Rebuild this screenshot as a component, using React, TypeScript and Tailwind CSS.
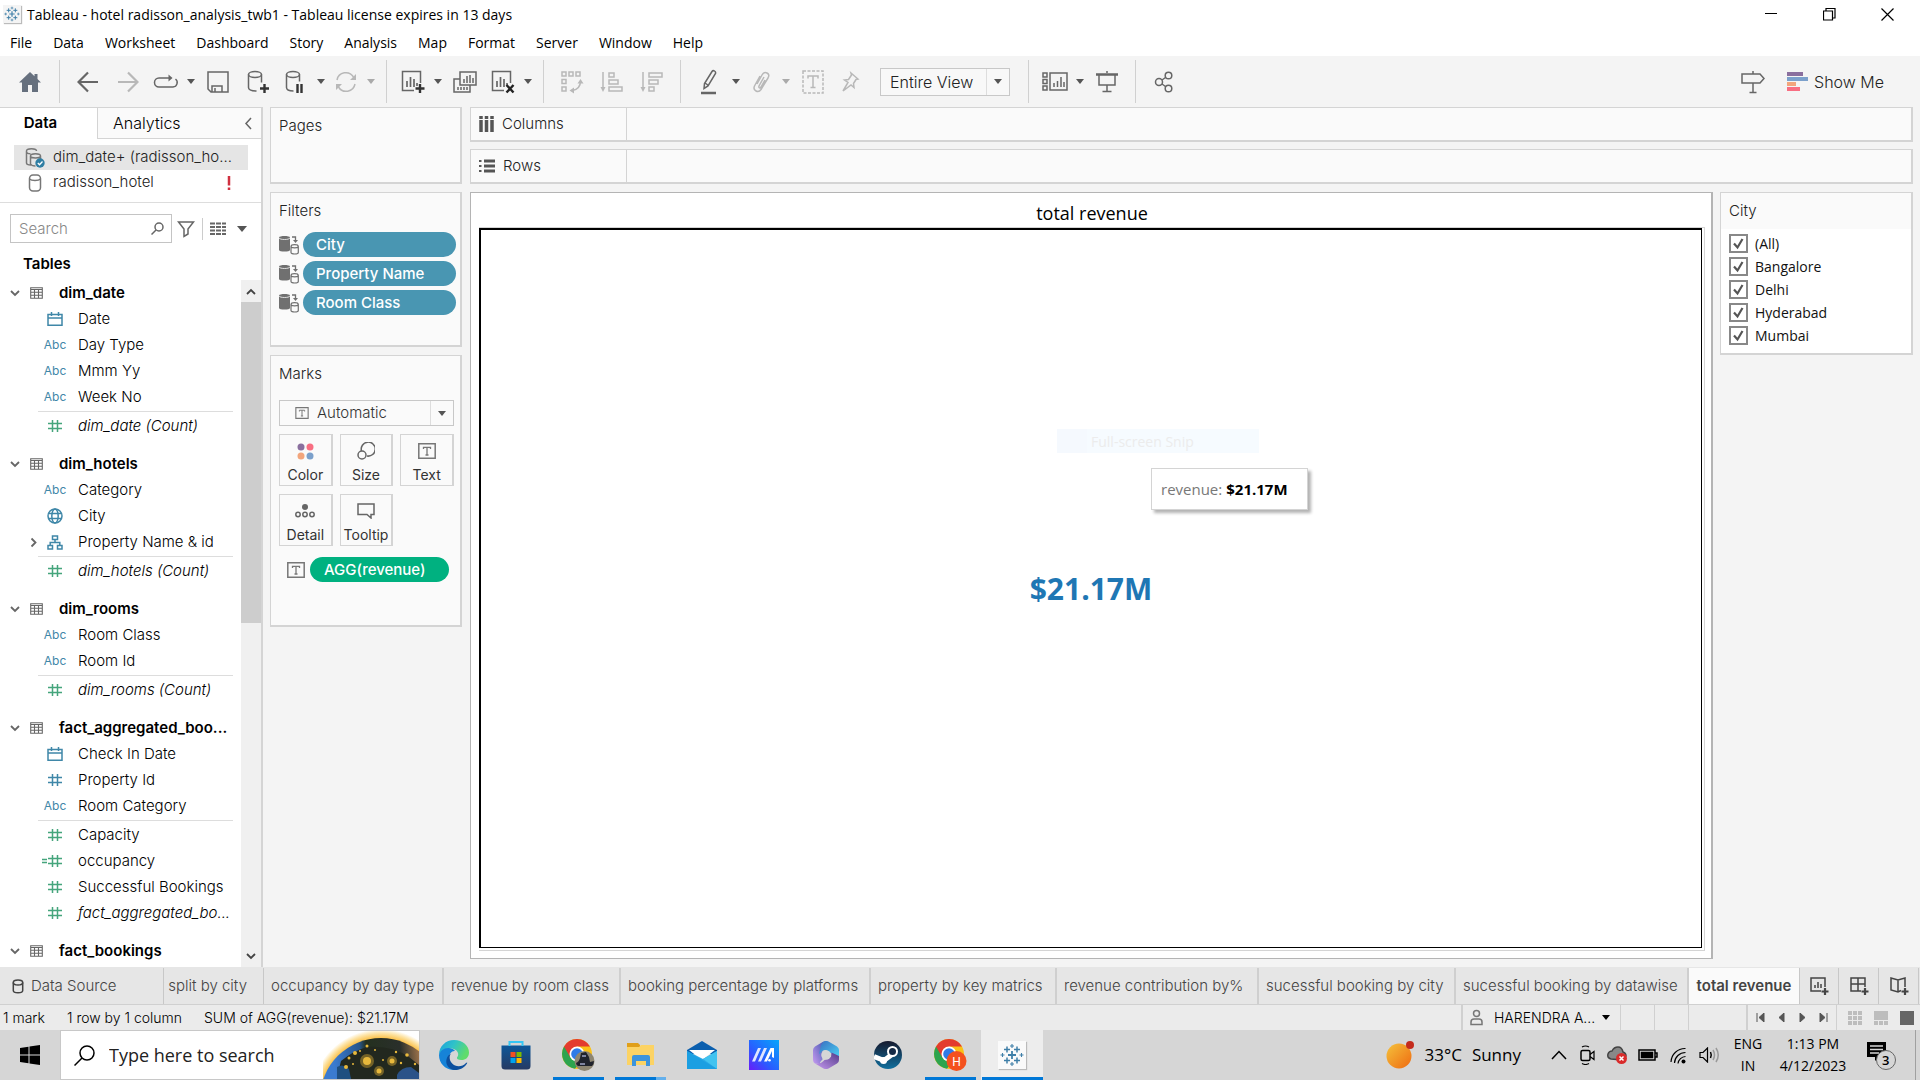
import type { ReactNode } from "react";

function Svg({ w, h = w, box, className = "", children }: { w: number; h?: number; box?: string; className?: string; children: ReactNode }) {
  return (
    <svg width={w} height={h} viewBox={box ?? `0 0 ${w} ${h}`} fill="none" stroke="currentColor" strokeWidth="1.5" className={`shrink-0 ${className}`} aria-hidden="true">
      {children}
    </svg>
  );
}

function Caret({ className = "text-[#555]" }: { className?: string }) {
  return (
    <Svg w={8} h={5} className={className}>
      <path d="M0 0h8L4 5z" fill="currentColor" stroke="none" />
    </Svg>
  );
}

const tableauMark = (
  <g stroke="#3f7fa8" strokeWidth="1.5">
    <path d="M12 8v8M8 12h8" strokeWidth="1.8" />
    <path d="M7 3.500v6M4 6.500h6M17 3.500v6M14 6.500h6M7 14.500v6M4 17.500h6M17 14.500v6M14 17.500h6" />
    <path d="M12 1v4M10 3h4M12 19v4M10 21h4M2.500 10v4M.5 12h4M21.500 10v4M19.500 12h4" strokeWidth="1.100" />
  </g>
);

function Sep() {
  return <span className="mx-2 h-[43px] w-px shrink-0 self-center bg-[#d0d0d0]" />;
}

function Tool({ label, wide = true, dim = false, children }: { label: string; wide?: boolean; dim?: boolean; children: ReactNode }) {
  return (
    <button type="button" aria-label={label} className={`flex h-full shrink-0 items-center justify-center ${wide ? "w-10" : "w-9"} ${dim ? "text-[#b8b8b8]" : "text-[#666]"}`}>
      {children}
    </button>
  );
}

function ToolCaret({ label, dim = false }: { label: string; dim?: boolean }) {
  return (
    <button type="button" aria-label={label} className="flex h-full w-3.5 shrink-0 items-center justify-center">
      <Caret className={dim ? "text-[#aaa]" : "text-[#555]"} />
    </button>
  );
}

const plus = <path d="M20 15v9M15.5 19.5h9" stroke="#333" strokeWidth="2.4" />;
const sheetBars = <path d="M7 12v6M10.500 8v10M14 10v8M17 14v3" strokeWidth="1.7" />;

function Toolbar() {
  return (
    <div className="flex h-[51px] items-center bg-[#f4f4f4]">
      <button type="button" aria-label="Start page" className="flex h-full w-[51px] items-center justify-center pl-2">
        <Svg w={24} h={22} className="text-[#66707e]">
          <path d="M12 1 1 11.500h3V21h6v-7h4v7h6v-9.500h3L19.500 8V3h-3v2.200z" fill="currentColor" stroke="none" />
        </Svg>
      </button>
      <Sep />
      <Tool label="Undo">
        <Svg w={22} h={22}><path d="M21 11H2M11 1.500 1.500 11l9.500 9.500" strokeWidth="2.200" /></Svg>
      </Tool>
      <Tool label="Redo" dim>
        <Svg w={22} h={22}><path d="M1 11h19M11 1.500 20.500 11 11 20.500" strokeWidth="2.200" /></Svg>
      </Tool>
      <Tool label="Replay" wide={false}>
        <Svg w={26} h={16}>
          <path d="M17 4H6a4.500 4.500 0 0 0 0 9h14a4.500 4.500 0 0 0 2.500-8" />
          <path d="m15.500.5 4 3.500-4 3.500z" fill="currentColor" stroke="none" />
        </Svg>
      </Tool>
      <ToolCaret label="Replay options" />
      <Tool label="Save">
        <Svg w={22} h={22}><path d="M1 1h20v20H4l-3-3zM5 21v-6h10v6M8 17v4" /></Svg>
      </Tool>
      <Tool label="New data source">
        <Svg w={26} h={26}>
          <ellipse cx="10" cy="5.500" rx="6.500" ry="3" />
          <path d="M3.500 5.500v13c0 2.500 3 3.500 8 3.500M16.500 5.500v8" />
          <path d="M19.500 15v9M15 19.500h9" stroke="#333" strokeWidth="2.400" />
        </Svg>
      </Tool>
      <Tool label="Pause auto updates" wide={false}>
        <Svg w={26} h={26}>
          <ellipse cx="10" cy="5.500" rx="6.500" ry="3" />
          <path d="M3.500 5.500v13c0 2.500 3 3.500 7 3.500M16.500 5.500v7" />
          <path d="M14.500 15v9M18.500 15v9" stroke="#333" strokeWidth="2.400" />
        </Svg>
      </Tool>
      <ToolCaret label="Pause options" />
      <Tool label="Run update" wide={false} dim>
        <Svg w={24} h={22}>
          <path d="M3 9a9 9 0 0 1 16.500-3M21 13a9 9 0 0 1-16.500 3" />
          <path d="M22 3v6h-6zM2 19v-6h6z" fill="currentColor" stroke="none" />
        </Svg>
      </Tool>
      <ToolCaret label="Update options" dim />
      <Sep />
      <Tool label="New worksheet" wide={false}>
        <Svg w={26} h={26}><path d="M14 21.500H2.500v-19h18V14" />{sheetBars}{plus}</Svg>
      </Tool>
      <ToolCaret label="New worksheet options" />
      <Tool label="Duplicate">
        <Svg w={24} h={22}>
          <path d="M7 1h16v13H7zM7 8H1v13h16v-7" />
          <path d="M11 8v4M14 5v7M17 4v8M20 7v5M5 16v3M8 16v3M11 16v3M14 16v3" />
        </Svg>
      </Tool>
      <Tool label="Clear sheet" wide={false}>
        <Svg w={26} h={26}><path d="M14 21.500H2.500v-19h18V14" />{sheetBars}<path d="m16.500 16 7 7.500m0-7.500-7 7.500" stroke="#222" strokeWidth="2.400" /></Svg>
      </Tool>
      <ToolCaret label="Clear sheet options" />
      <Sep />
      <Tool label="Swap rows and columns" dim>
        <Svg w={24} h={24}>
          <path d="M2 2h4v4H2zM9 2h4v4H9zM16 2h4v4h-4zM2 9.500h4v4H2zM2 17h4v4H2z" />
          <path d="M20.500 11c0 5-3 8.500-8 9.500" />
          <path d="m20.500 9 3 4.500h-6zM9.500 20.500l4.500-3v6z" fill="currentColor" stroke="none" />
        </Svg>
      </Tool>
      <Tool label="Sort ascending" dim>
        <Svg w={24} h={22}><path d="M3 1v18M9 2h5v4H9zM9 9h9v4H9zM9 16h13v4H9z" /><path d="M3 21 .5 16h5z" fill="currentColor" stroke="none" /></Svg>
      </Tool>
      <Tool label="Sort descending" dim>
        <Svg w={24} h={22}><path d="M3 1v18M9 2h13v4H9zM9 9h9v4H9zM9 16h5v4H9z" /><path d="M3 21 .5 16h5z" fill="currentColor" stroke="none" /></Svg>
      </Tool>
      <Sep />
      <Tool label="Highlight">
        <Svg w={20} h={26}><path d="M13 2.500q1-1.500 2.500-.5t1 2.500L9 17l-4 2.500.5-5zM6 14l3.500 2.500" /><path d="M2 24h15" strokeWidth="2.500" /></Svg>
      </Tool>
      <ToolCaret label="Highlight options" />
      <Tool label="Group members" wide={false} dim>
        <Svg w={18} h={24}><path d="m5 14 5-9q2-3.500 5-2t1 5L9 19.500q-2 3-5 1.500t-1.500-5L8 6M12 7l-5 9q-.5 2 1 2l1-1 4-7" /></Svg>
      </Tool>
      <ToolCaret label="Group options" dim />
      <Tool label="Show mark labels" dim>
        <Svg w={22} h={24}><path d="M1 1h20v22H1z" strokeDasharray="3 1.500" /><path d="M6 8.500V6h10v2.500M11 6v11M8.500 17.500h5" /></Svg>
      </Tool>
      <Tool label="Fix axes" wide={false} dim>
        <Svg w={20} h={22}><path d="m10 2 7 6-2 .5-2.500 4 .5 4-3-2.500L2 20l5-8.500L3.500 9l4-.5L10.500 4z" /></Svg>
      </Tool>
      <label className="relative ml-[11px] mr-2.5 flex h-7 w-[130px] shrink-0 items-center border border-[#c8c8c8] bg-[#f8f8f8]">
        <span className="sr-only">Fit</span>
        <select className="w-full appearance-none bg-transparent pl-[9px] text-[16px] font-light leading-6 text-[#222] outline-none">
          <option>Entire View</option>
        </select>
        <span className="pointer-events-none absolute inset-y-0 right-0 flex w-[23px] items-center justify-center border-l border-[#ddd]"><Caret /></span>
      </label>
      <Sep />
      <Tool label="Show or hide cards" wide={false}>
        <Svg w={26} h={20}><path d="M1 1h4v4H1zM1 7.500h4v4H1zM1 14h4v4H1zM8 1h17v17H8zM12 11v4M15.500 9v6M19 5v10M22 10v5" /></Svg>
      </Tool>
      <ToolCaret label="Card options" />
      <Tool label="Presentation mode">
        <Svg w={22} h={22}><path d="M3 4v10h16V4M11 14v6M6.500 20.500h9M11 0v2" /><path d="M0 3.500h22" strokeWidth="2.500" /></Svg>
      </Tool>
      <Sep />
      <Tool label="Share">
        <Svg w={20} h={22}><circle cx="5" cy="11" r="3.500" /><circle cx="14.500" cy="4.500" r="3.300" /><circle cx="14.500" cy="17.500" r="3.300" /><path d="m8 9 3.500-2.500M8 13l3.500 2.500" /></Svg>
      </Tool>
      <div className="flex-1" />
      <Tool label="Data guide">
        <Svg w={24} h={24}><path d="M1 4h18l4 4.500-4 4.500H1zM12 1v3M12 13v9M8.500 22.500h7" /></Svg>
      </Tool>
      <button type="button" className="ml-3.5 mr-9 flex items-center gap-1.5 text-[16px] font-light text-[#222]">
        <Svg w={21} h={20}>
          <g stroke="none"><path d="M0 0h16v4H0z" fill="#8a6f9e" /><path d="M0 5h21v4H0z" fill="#7ba0cb" /><path d="M0 10h9v4H0z" fill="#f2a57c" /><path d="M0 15h13v4H0z" fill="#f86e82" /></g>
        </Svg>
        Show Me
      </button>
    </div>
  );
}

type Kind = "date" | "abc" | "num" | "measure" | "calc" | "geo" | "hier";
type Field = { kind: Kind; name: string; count?: boolean };
type Table = { name: string; dims: Field[]; measures: Field[] };

const tables: Table[] = [
  {
    name: "dim_date",
    dims: [{ kind: "date", name: "Date" }, { kind: "abc", name: "Day Type" }, { kind: "abc", name: "Mmm Yy" }, { kind: "abc", name: "Week No" }],
    measures: [{ kind: "measure", name: "dim_date (Count)", count: true }],
  },
  {
    name: "dim_hotels",
    dims: [{ kind: "abc", name: "Category" }, { kind: "geo", name: "City" }, { kind: "hier", name: "Property Name & id" }],
    measures: [{ kind: "measure", name: "dim_hotels (Count)", count: true }],
  },
  {
    name: "dim_rooms",
    dims: [{ kind: "abc", name: "Room Class" }, { kind: "abc", name: "Room Id" }],
    measures: [{ kind: "measure", name: "dim_rooms (Count)", count: true }],
  },
  {
    name: "fact_aggregated_boo...",
    dims: [{ kind: "date", name: "Check In Date" }, { kind: "num", name: "Property Id" }, { kind: "abc", name: "Room Category" }],
    measures: [
      { kind: "measure", name: "Capacity" },
      { kind: "calc", name: "occupancy" },
      { kind: "measure", name: "Successful Bookings" },
      { kind: "measure", name: "fact_aggregated_bo...", count: true },
    ],
  },
  { name: "fact_bookings", dims: [], measures: [] },
];

function FieldIcon({ kind }: { kind: Kind }) {
  if (kind === "abc") return <span className="text-[12px] text-[#3f87a8]">Abc</span>;
  if (kind === "date")
    return <Svg w={16} h={14} className="text-[#3f87a8]"><path d="M1 2.500h14v10.700H1zM1 6h14M4.500 0v4M11.500 0v4" /></Svg>;
  if (kind === "geo")
    return <Svg w={16} className="text-[#3f87a8]"><circle cx="8" cy="8" r="7" /><ellipse cx="8" cy="8" rx="3.200" ry="7" /><path d="M2 5.500h12M2 10.500h12" /></Svg>;
  if (kind === "hier")
    return <Svg w={16} h={15} className="text-[#3f87a8]"><path d="M5.500 1h5v3.500h-5zM1 10.500h4.500V14H1zM10.500 10.500H15V14h-4.500zM8 4.500v3M3.200 10V7.500h9.600V10" /></Svg>;
  return (
    <span className="relative flex">
      <Svg w={14} className={kind === "num" ? "text-[#3f87a8]" : "text-[#45a57c]"}><path d="M4.500 1v12M9.500 1v12M0 4.500h14M0 9.500h14" /></Svg>
      {kind === "calc" && <Svg w={5} h={6} className="absolute -left-[6px] top-1 text-[#45a57c]"><path d="M0 1.500h5M0 4.500h5" /></Svg>}
    </span>
  );
}

function Chevron({ className = "" }: { className?: string }) {
  return <Svg w={10} h={7} className={className}><path d="m1 1 4 4 4-4" strokeWidth="1.800" /></Svg>;
}

function FieldRow({ field }: { field: Field }) {
  return (
    <li className="flex h-[26px] items-center">
      <span className="flex w-[41px] justify-end pr-0.5">
        {field.kind === "hier" && <Chevron className="-rotate-90 text-[#666]" />}
      </span>
      <span className="flex w-7 justify-center">
        <FieldIcon kind={field.kind} />
      </span>
      <span className={`ml-[9px] whitespace-nowrap text-[15px] font-light text-black ${field.count ? "italic" : ""}`}>{field.name}</span>
    </li>
  );
}

function DataPane() {
  return (
    <aside className="flex w-[263px] shrink-0 flex-col border-r-2 border-[#d4d4d4] bg-white">
      <div className="flex h-8 text-[15px]" role="tablist">
        <button type="button" role="tab" aria-selected="true" className="w-[97px] border-t border-[#d4d4d4] pr-4 font-semibold text-black">Data</button>
        <button type="button" role="tab" aria-selected="false" className="flex flex-1 items-center justify-between border border-r-0 border-[#d4d4d4] bg-[#fafafa] pl-[15px] pr-[9px] text-[16px] font-light text-black">
          Analytics
          <Svg w={8} h={13} className="text-[#666]"><path d="M7 1 2 6.500 7 12" /></Svg>
        </button>
      </div>
      <ul className="border-b border-[#ddd] pb-[7px] pt-1.5 text-[15px] font-light text-[#222]">
        <li className="ml-3.5 mr-[13px] flex h-[25px] items-center gap-2 bg-[#e5e5e5] pl-[11px]">
          <Svg w={20} h={20} className="text-[#777]">
            <path d="M6 17c-3 0-4.500-.7-4.500-2V3c0-3 10-3 10 0M1.500 3.500c0 1.500 2 2.300 4 2.300M5.500 8c0-3 10-3 10 0v3M5.500 8c0 2.500 10 2.500 10 0M5.500 8v8q1 2 5 2" />
            <circle cx="15" cy="15" r="4.700" fill="#2f7ea3" stroke="none" />
            <path d="m12.800 15 1.700 1.700 3-3.200" stroke="#fff" strokeWidth="1.300" />
          </Svg>
          dim_date+ (radisson_ho...
        </li>
        <li className="ml-3.5 mr-[13px] flex h-[25px] items-center pl-3.5">
          <Svg w={14} h={18} className="text-[#777]"><rect x="1.500" y="1" width="11" height="16" rx="3.500" /><path d="M1.500 5c2 2 9 2 11 0" /></Svg>
          <span className="ml-[11px] flex-1">radisson_hotel</span>
          <Svg w={4} h={14} className="mr-[17px] text-[#d03040]"><path d="M2 0v9.500M2 11.500V14" strokeWidth="2.500" /></Svg>
        </li>
      </ul>
      <div className="flex items-center pl-2.5 pt-[11px]">
        <label className="flex h-[29px] w-[162px] items-center border border-[#c4c4c4] pl-2 pr-[7px]">
          <span className="sr-only">Search fields</span>
          <input type="text" placeholder="Search" className="h-6 w-full min-w-0 bg-transparent text-[15px] font-light leading-6 outline-none placeholder:text-[#888]" />
          <Svg w={13} h={13} className="text-[#666]"><circle cx="8" cy="5" r="4" /><path d="m5 8-4.500 4.500" /></Svg>
        </label>
        <button type="button" aria-label="Filter fields" className="ml-[5px] text-[#666]"><Svg w={18} h={18}><path d="M1.500 2h15l-5.500 7v5l-4 2.500V9z" /></Svg></button>
        <span className="mx-[7px] h-[22px] w-px bg-[#ccc]" />
        <button type="button" aria-label="View data" className="text-[#666]"><Svg w={16} h={13}><path d="M0 1.500h16M0 5h16M0 8.500h16M0 12h16" strokeDasharray="5 1" strokeWidth="1.800" /></Svg></button>
        <button type="button" aria-label="Pane menu" className="ml-[11px]"><Svg w={10} h={6} className="text-[#555]"><path d="M0 0h10L5 6z" fill="currentColor" stroke="none" /></Svg></button>
      </div>
      <div className="flex h-[37px] items-center pl-[23px] pt-[5px] text-[15px] font-semibold text-black">Tables</div>
      <div className="flex flex-1">
        <ul className="min-w-0 flex-1">
          {tables.map((t) => (
            <li key={t.name} className="mb-3 last:mb-0">
              <button type="button" className="flex h-[26px] items-center text-[15px] font-semibold text-black">
                <Chevron className="ml-2.5 text-[#666]" />
                <Svg w={13} h={12} className="ml-2.5 text-[#666]"><path d="M.7.7h11.600v10.600H.7zM.7 2.500h11.600M.7 5.300h11.600M.7 8.300h11.600M4.500 3v8M8.500 3v8" strokeWidth="1.100" /></Svg>
                <span className="ml-4 whitespace-nowrap">{t.name}</span>
              </button>
              <ul>{t.dims.map((f) => <FieldRow key={f.name} field={f} />)}</ul>
              {t.measures.length > 0 && (
                <ul className="mt-px">
                  <li aria-hidden="true" className="mb-px ml-[38px] mr-2 h-px bg-[#ddd]" />
                  {t.measures.map((f) => <FieldRow key={f.name} field={f} />)}
                </ul>
              )}
            </li>
          ))}
        </ul>
        <div className="flex w-5 shrink-0 flex-col items-center bg-[#f0f0f0]">
          <div className="flex h-[22px] items-center"><Chevron className="rotate-180 text-[#444]" /></div>
          <div className="h-[321px] w-full bg-[#cdcdcd]" />
          <div className="flex-1" />
          <div className="flex h-[22px] items-center"><Chevron className="text-[#444]" /></div>
        </div>
      </div>
    </aside>
  );
}

function ContextIcon() {
  return (
    <Svg w={20} h={20} className="text-[#707070]">
      <path d="M0 2.500C0 .5 11 .5 11 2.500V15c0 2-11 2-11 0z" fill="currentColor" stroke="none" />
      <path d="M0 3c1 2 10 2 11 0" stroke="#fafafa" strokeWidth=".8" />
      <path d="M13 2h3.500v4" strokeWidth="1.300" /><path d="M14 5h5l-2.500 3z" fill="currentColor" stroke="none" />
      <path d="M12 11.500c0-2.500 7.300-2.500 7.300 0v6c0 2-7.300 2-7.300 0zc0 1.800 7.300 1.800 7.300 0" fill="#fafafa" strokeWidth="1.200" />
    </Svg>
  );
}

function TextIcon({ w = 18, h = 16 }: { w?: number; h?: number }) {
  return (
    <Svg w={w} h={h} box="0 0 18 16" className="text-[#777]">
      <path d="M.8.8h16.400v14.400H.8z" /><path d="M5.500 6V4.300h7V6M9 4.300V12M7.500 12h3" strokeWidth="1.300" />
    </Svg>
  );
}

function MarkButton({ label, children }: { label: string; children: ReactNode }) {
  return (
    <button type="button" className="flex h-[52px] flex-col items-center border border-r-2 border-[#d4d4d4] pt-1.5 text-[14px] leading-5 text-[#333]">
      <span className="mb-1 flex h-5 items-center text-[#666]">{children}</span>
      {label}
    </button>
  );
}

function Card({ title, className = "", children }: { title: string; className?: string; children?: ReactNode }) {
  return (
    <section className={`border border-b-2 border-r-2 border-[#d4d4d4] bg-[#fafafa] ${className}`}>
      <h2 className="flex h-[37px] items-center pl-2 text-[15px] font-light text-[#222]">{title}</h2>
      {children}
    </section>
  );
}

function Cards() {
  return (
    <div className="flex w-48 shrink-0 flex-col gap-2">
      <Card title="Pages" className="h-[77px]" />
      <Card title="Filters" className="h-[155px]">
        <ul className="flex flex-col gap-1 pl-2 pr-1 pt-0.5">
          {["City", "Property Name", "Room Class"].map((f) => (
            <li key={f} className="flex items-center gap-1">
              <ContextIcon />
              <button type="button" className="h-[25px] flex-1 rounded-full bg-[#4996b2] pl-[13px] text-left text-[15px] font-medium leading-none text-white">{f}</button>
            </li>
          ))}
        </ul>
      </Card>
      <Card title="Marks" className="h-[272px]">
        <label className="relative mx-2 mr-1.5 mt-[7px] flex h-[26px] items-center border border-[#c8c8c8] pl-[15px]">
          <span className="sr-only">Mark type</span>
          <TextIcon w={14} h={12} />
          <select className="flex-1 appearance-none bg-transparent pl-2 text-[15px] font-light leading-5 text-[#333] outline-none">
            <option>Automatic</option>
          </select>
          <span className="pointer-events-none absolute inset-y-0 right-0 flex w-[23px] items-center justify-center border-l border-[#ddd]"><Caret /></span>
        </label>
        <div className="mx-2 mr-1.5 mt-2 grid grid-cols-3 gap-x-[7px] gap-y-2">
          <MarkButton label="Color">
            <Svg w={17} h={17}><g stroke="none"><circle cx="4" cy="4" r="3.500" fill="#8a6f9e" /><circle cx="13" cy="4" r="3.500" fill="#f86e82" /><circle cx="4" cy="13" r="3.500" fill="#f2a57c" /><circle cx="13" cy="13" r="3.500" fill="#7ba0cb" /></g></Svg>
          </MarkButton>
          <MarkButton label="Size"><Svg w={18} h={18}><path d="M4.500 9a7 7 0 1 1 5.500 5" /><circle cx="5" cy="13" r="4" /></Svg></MarkButton>
          <MarkButton label="Text"><TextIcon /></MarkButton>
          <MarkButton label="Detail"><Svg w={20} h={14}><circle cx="10" cy="3" r="3" fill="currentColor" stroke="none" /><circle cx="3" cy="10.500" r="2.200" /><circle cx="10" cy="10.500" r="2.200" /><circle cx="17" cy="10.500" r="2.200" /></Svg></MarkButton>
          <MarkButton label="Tooltip"><Svg w={18} h={16}><path d="M1 1h16v10.500h-3V15l-4-3.500H1z" /></Svg></MarkButton>
        </div>
        <div className="flex items-center gap-[5px] pl-4 pr-[11px] pt-[11px]">
          <TextIcon />
          <button type="button" className="h-[25px] flex-1 rounded-full bg-[#00b180] pl-3.5 text-left text-[15px] font-medium leading-none text-white">AGG(revenue)</button>
        </div>
      </Card>
    </div>
  );
}

function Shelf({ name, children }: { name: string; children: ReactNode }) {
  return (
    <div className="flex h-[35px] border border-b-2 border-r-2 border-[#d4d4d4] bg-[#fafafa]">
      <div className="flex w-[156px] items-center gap-2 border-r border-[#d4d4d4] pl-2 text-[15px] font-light text-[#222]">
        {children}
        {name}
      </div>
    </div>
  );
}

const cities = ["(All)", "Bangalore", "Delhi", "Hyderabad", "Mumbai"];

function Workspace() {
  return (
    <main className="flex min-w-0 flex-1 flex-col gap-2">
      <div className="flex flex-col gap-[7px]">
        <Shelf name="Columns"><Svg w={15} h={16} className="text-[#555]"><path d="M2 0v3M7.500 0v3M13 0v3M2 4v12M7.500 4v12M13 4v12" strokeWidth="3.500" /></Svg></Shelf>
        <Shelf name="Rows"><Svg w={16} h={14} className="text-[#555]"><path d="M0 2h2.500M0 7h2.500M0 12h2.500" strokeWidth="2" /><path d="M5 2h11M5 7h11M5 12h11" strokeWidth="3" /></Svg></Shelf>
      </div>
      <div className="flex min-h-0 flex-1 items-start gap-[7px]">
        <section className="flex min-w-0 flex-1 flex-col self-stretch border border-r-2 border-[#b4b4b4] bg-white pb-[7px] pl-2 pr-1.5 font-['Open_Sans','Noto_Sans',sans-serif]">
          <h1 className="flex h-[34px] items-center justify-center pt-1.5 text-[18px] text-black">total revenue</h1>
          <div className="flex flex-1 border border-l-0 border-[#d4d4d4] pb-0.5 pr-0.5">
            <div className="relative flex flex-1 items-center justify-center border border-l-2 border-t-2 border-black">
              <p className="text-[30px] font-bold text-[#1f77b4]">$21.17M</p>
              <div className="absolute left-[576px] top-[199px] flex h-6 w-[202px] items-center bg-[#f6fbff] text-[14px] text-[#ececec]">
                <span className="mr-1 h-full w-[30px] bg-[#f5f9fe]" />
                Full-screen Snip
              </div>
              <div role="tooltip" className="absolute left-[670px] top-[238px] flex h-[42px] w-[157px] items-center gap-1 whitespace-nowrap border border-[#d4d4d4] bg-white pl-[9px] text-[15px] text-[#787878] shadow-[3px_3px_3px_rgba(0,0,0,0.3)]">
                revenue: <b className="text-black">$21.17M</b>
              </div>
            </div>
          </div>
        </section>
        <fieldset className="w-[193px] shrink-0 border border-b-2 border-r-2 border-[#d4d4d4] bg-white">
          <div className="flex h-9 items-center bg-[#fafafa] pl-2 text-[15px] font-light text-[#222]">City</div>
          <div className="flex flex-col pb-1.5 pl-2 pt-[3px] font-['Open_Sans','Noto_Sans',sans-serif] text-[14px] text-[#111]">
            {cities.map((c) => (
              <label key={c} className="flex h-[23px] items-center gap-[7px]">
                <span className="grid">
                  <input type="checkbox" defaultChecked className="peer h-[19px] w-[19px] appearance-none border-2 border-[#888] bg-white [grid-area:1/1]" />
                  <Svg w={19} className="pointer-events-none invisible text-[#555] [grid-area:1/1] peer-checked:visible"><path d="m5 9.500 3.500 4L13.500 5" strokeWidth="2.200" /></Svg>
                </span>
                {c}
              </label>
            ))}
          </div>
        </fieldset>
      </div>
    </main>
  );
}

const sheets = [
  { name: "occupancy by day type", w: "w-[180px]" },
  { name: "revenue by room class", w: "w-[177px]" },
  { name: "booking percentage by platforms", w: "w-[250px]" },
  { name: "property by key matrics", w: "w-[186px]" },
  { name: "revenue contribution by%", w: "w-[202px]" },
  { name: "sucessful booking by city", w: "w-[197px]" },
  { name: "sucessful booking by datawise", w: "w-[233px]" },
];

function SheetTabs() {
  return (
    <nav className="flex h-[38px] border-b border-[#d0d0d0] bg-[#e6e6e6] pt-px text-[15px] font-light text-[#444]">
      <button type="button" className="flex w-[164px] shrink-0 items-center gap-[7px] border-r border-[#c8c8c8] pl-3">
        <Svg w={12} h={15}><ellipse cx="6" cy="3.500" rx="4.700" ry="2.500" /><path d="M1.300 3.500v8c0 3 9.400 3 9.400 0v-8" /></Svg>
        Data Source
      </button>
      <button type="button" className="flex w-[100px] shrink-0 items-center justify-end overflow-hidden whitespace-nowrap border-r border-[#c8c8c8] pr-4">y split by city</button>
      {sheets.map((s) => (
        <button key={s.name} type="button" className={`shrink-0 whitespace-nowrap border-r-2 border-[#cfcfcf] pl-[7px] text-left ${s.w}`}>{s.name}</button>
      ))}
      <button type="button" aria-current="page" className="w-[110px] shrink-0 whitespace-nowrap bg-[#fafafa] font-semibold text-[#444]">total revenue</button>
      <button type="button" aria-label="New worksheet" className="flex w-10 items-center justify-center border-x border-[#c8c8c8] pl-0.5"><Svg w={20}><path d="M11 15H1V2h14v9M5 9v3M8 6v6M11 8v4" /><path d="M15 12v7M11.500 15.500h7" strokeWidth="2.200" /></Svg></button>
      <button type="button" aria-label="New dashboard" className="flex w-10 items-center justify-center border-r border-[#c8c8c8] pl-0.5"><Svg w={20}><path d="M11 15H1V2h14v9M8 2v13M1 8h14" /><path d="M15 12v7M11.500 15.500h7" strokeWidth="2.200" /></Svg></button>
      <button type="button" aria-label="New story" className="flex w-10 items-center justify-center border-r border-[#c8c8c8] pl-0.5"><Svg w={20}><path d="M11 14.500 8 16l-7-2V2l7 2 7-2v9M8 4v12" /><path d="M15 12v7M11.500 15.500h7" strokeWidth="2.200" /></Svg></button>
    </nav>
  );
}

function StatusBar() {
  return (
    <div className="flex h-[25px] items-center bg-[#ebebeb] text-[14px] font-light text-black">
      <span className="ml-[3px]">1 mark</span>
      <span className="ml-[22px]">1 row by 1 column</span>
      <span className="ml-[22px]">SUM of AGG(revenue): $21.17M</span>
      <div className="flex-1" />
      <button type="button" className="flex h-full w-[160px] items-center border-x border-l-2 border-[#d0d0d0] pl-[7px]">
        <Svg w={13} h={17} className="text-[#777]"><circle cx="6.500" cy="4.500" r="3" /><path d="M1 15.500V13q0-3 3-3h5q3 0 3 3v2.500z" /></Svg>
        <span className="ml-[11px] flex-1 text-left">HARENDRA A...</span>
        <Caret className="mr-2.5 text-black" />
      </button>
      <span className="h-full w-[34px] border-r border-[#d0d0d0]" />
      <span className="h-full w-[34px] border-r border-[#d0d0d0]" />
      <span className="h-full w-[59px] border-r-2 border-[#d0d0d0]" />
      <div className="flex h-full w-[89px] items-center justify-around border-r border-[#d0d0d0] px-0.5 text-[#555]">
        {[["First", "M1 0v9M8 0v9L3 4.500z"], ["Previous", "M7 0v9L2 4.500z"], ["Next", "M2 0v9l5-4.500z"], ["Last", "M8 0v9M1 0v9l5-4.500z"]].map(([n, d]) => (
          <button key={n} type="button" aria-label={`${n} sheet`}><Svg w={9} h={9}><path d={d} fill="currentColor" strokeWidth="1" /></Svg></button>
        ))}
      </div>
      <div className="flex w-[83px] items-center gap-3 pl-[11px]">
        <button type="button" aria-label="Sheet sorter" className="text-[#bdbdbd]"><Svg w={14}><path d="M0 2h14M0 7h14M0 12h14" strokeWidth="4" strokeDasharray="4 1" /></Svg></button>
        <button type="button" aria-label="Filmstrip" className="text-[#bdbdbd]"><Svg w={14}><path d="M0 4.500h14" strokeWidth="9" /><path d="M0 12h14" strokeWidth="4" strokeDasharray="4 1" /></Svg></button>
        <button type="button" aria-label="Tabs" className="h-3.5 w-3.5 bg-[#666]" />
      </div>
    </div>
  );
}

function ChromeIcon({ children }: { children: ReactNode }) {
  return (
    <Svg w={34} h={34}>
      <g stroke="none">
        <circle cx="16" cy="16" r="15" fill="#fbc116" />
        <path d="M16 16 3 8.500A15 15 0 0 0 14 30.800L22.500 19.700z" fill="#2da44e" />
        <path d="M3 8.500A15 15 0 0 1 29 8.500H16L9.500 19.700z" fill="#e33b2e" />
        <circle cx="16" cy="16" r="7.500" fill="#fff" /><circle cx="16" cy="16" r="5.800" fill="#2f7be8" />
        {children}
      </g>
    </Svg>
  );
}

const apps: { name: string; line: string; icon: ReactNode }[] = [
  {
    name: "Edge", line: "",
    icon: (
      <Svg w={30} h={30}>
        <defs>
          <linearGradient id="edgeTop" x1="0" y1="0" x2="1" y2=".4"><stop stopColor="#1a9fdd" /><stop offset=".5" stopColor="#2fc2c9" /><stop offset="1" stopColor="#5fdc6b" /></linearGradient>
        </defs>
        <g stroke="none">
          <path d="M0 15C0 6 7 0 15 0c9 0 15 6 15 12.500 0 5-3.500 7.500-7.500 7.500-3.500 0-5-1-4.500-2.500 1-1.500 1.500-2.500 1-4.500C18 9.500 14 8 10 8.500 5 9 1 12 0 15z" fill="url(#edgeTop)" />
          <path d="M0 15c1-4.500 5.500-7.500 10-7 3 .3 5 1.500 6 3-3-.5-6 2.500-6 7 0 5 4 9 9 10-2 1.500-3 2-5 2C6 29.500 0 23 0 15z" fill="#1683d8" />
          <path d="M12 13.500c-2 2-2.500 9 4 12 4 1.700 8 .5 11-2.500 1-1 1.500-.5 1 .5C25.500 28 20 30.500 15 30 9 28.500 6.500 24 7.500 19.500c.5-3 2.500-5 4.500-6z" fill="#0c4f9e" />
        </g>
      </Svg>
    ),
  },
  {
    name: "Microsoft Store", line: "",
    icon: (
      <Svg w={30} h={30}>
        <defs><linearGradient id="bag" x1="0" y1="0" x2="0" y2="1"><stop stopColor="#0d5799" /><stop offset="1" stopColor="#263a63" /></linearGradient></defs>
        <path d="M.5 5.500h29V26q0 3.500-3.500 3.500H4Q.500 29.500.500 26z" fill="url(#bag)" stroke="none" /><path d="M8.500 6V2h13v4" stroke="#35c6f4" strokeWidth="2" />
        <g stroke="none"><path d="M9.500 12h5v5h-5z" fill="#f25022" /><path d="M15.500 12h5v5h-5z" fill="#7fba00" /><path d="M9.500 18h5v5h-5z" fill="#00a4ef" /><path d="M15.500 18h5v5h-5z" fill="#ffb900" /></g>
      </Svg>
    ),
  },
  {
    name: "Chrome", line: "w-[51px] bg-[#0078d7]",
    icon: <ChromeIcon><circle cx="23.500" cy="23" r="10" fill="#8e8672" /><path d="M15 25q3-1 4-5l1-5 5-1 3 5 1 5 4-1q0 3-2 5h-14q-2-1-2-3z" fill="#20232d" /><path d="M21 17h4v2h-4zM19 25h5v2h-5z" fill="#7f84a0" /></ChromeIcon>,
  },
  {
    name: "File Explorer", line: "w-[51px] bg-[linear-gradient(90deg,#0078d7_80%,#64b0ec_80%)]",
    icon: (
      <Svg w={30} h={28}>
        <g stroke="none"><path d="M2 2h11l2 2v5H2z" fill="#e09f1a" /><path d="M2 6h12l2-2h13v20H2z" fill="#fcd364" /><path d="M7 25V16q0-2 2-2h14q2 0 2 2v9h-4v-5H11v5z" fill="#3d94dc" /></g>
      </Svg>
    ),
  },
  {
    name: "Mail", line: "",
    icon: (
      <Svg w={30} h={28}>
        <g stroke="none"><path d="M0 9 15 0l15 9v4H0z" fill="#0b5fae" /><path d="M2 9h26L15 19z" fill="#fff" /><path d="M0 10v18h30V10L16 18z" fill="#2aa9e6" /><path d="M30 10v18L16 18z" fill="#41c3f0" /><path d="m0 10 30 18H0z" fill="#1b9fe2" /></g>
      </Svg>
    ),
  },
  {
    name: "MyASUS", line: "",
    icon: (
      <Svg w={30} h={30}>
        <defs><linearGradient id="asus" x1="0" y1="1" x2="1" y2="0"><stop stopColor="#6a1cf8" /><stop offset=".4" stopColor="#2a5cff" /><stop offset="1" stopColor="#05a6fb" /></linearGradient></defs>
        <path d="M0 0h30v30H0z" fill="url(#asus)" stroke="none" />
        <path d="M3 21.500h3L12 8H9zM9 21.500h3L18 8h-3z" fill="#dfe6ff" stroke="none" />
        <path d="M15 21.500h3L23 11v6l2 1V8h-3.500z" fill="#fff" stroke="none" /><circle cx="20.500" cy="20.300" r="1.300" fill="#fff" stroke="none" />
      </Svg>
    ),
  },
  {
    name: "Microsoft 365", line: "",
    icon: (
      <Svg w={28} h={28}>
        <defs>
          <linearGradient id="m1" x1="1" y1="0" x2="0" y2="1"><stop stopColor="#4a5bb5" /><stop offset="1" stopColor="#c79bf0" /></linearGradient>
          <linearGradient id="m2" x1="0" y1="0" x2="1" y2="1"><stop stopColor="#3a6fc0" /><stop offset="1" stopColor="#49d2f5" /></linearGradient>
          <linearGradient id="m3" x1="0" y1="1" x2="1" y2="0"><stop stopColor="#c79bf0" /><stop offset="1" stopColor="#543a8a" /></linearGradient>
        </defs>
        <g stroke="none">
          <path d="M11.500.500 3 5.500Q1 7 1 9v10q0 2.500 2 3.500l5 .5q-.5-1.500 1-3l1.500-1.500V9z" fill="url(#m1)" />
          <path d="M11.500.500Q14-.8 16.500.500l8.500 5Q27 7 27 9v8l-9-5.500L14 9q-4 0-5.500 3L7 13l2-9z" fill="url(#m2)" />
          <path d="M27 15v4q0 2.500-2 3.500l-8.500 5q-2.500 1.300-5 0L3 22.500q6 1 9.500-3.500l6.500-3 .5-4.500z" fill="url(#m3)" />
          <circle cx="14" cy="14" r="4.800" fill="#d6d6d6" />
        </g>
      </Svg>
    ),
  },
  {
    name: "Steam", line: "",
    icon: (
      <Svg w={28} h={28}>
        <defs><linearGradient id="steam" x1="0" y1="0" x2="0" y2="1"><stop stopColor="#171a2e" /><stop offset="1" stopColor="#0f6f9e" /></linearGradient></defs>
        <circle cx="14" cy="14" r="14" fill="url(#steam)" stroke="none" />
        <path d="M0 15.500 10 19.500l8-6" stroke="#fff" strokeWidth="5" /><circle cx="18.500" cy="10.500" r="4.500" fill="#152a45" stroke="#fff" strokeWidth="2" /><circle cx="9.500" cy="19.500" r="3.500" fill="#fff" stroke="none" />
      </Svg>
    ),
  },
  {
    name: "Chrome profile H", line: "w-[51px] bg-[#0078d7]",
    icon: <ChromeIcon><circle cx="23.500" cy="23" r="10" fill="#f4511e" /><text x="23.500" y="27.500" textAnchor="middle" fontSize="12" fill="#fff" fontFamily="Roboto">H</text></ChromeIcon>,
  },
  {
    name: "Tableau", line: "w-[61px] bg-[#0078d7]",
    icon: <span className="flex h-7 w-7 items-center justify-center bg-[#fafafa] shadow-[1px_1px_1px_#bbb]"><Svg w={24} box="0 0 24 24">{tableauMark}</Svg></span>,
  },
];

function Taskbar() {
  return (
    <footer className="flex h-[50px] items-center bg-[#d6d6d6] font-['Open_Sans','Noto_Sans',sans-serif] text-black">
      <button type="button" aria-label="Start" className="flex w-[60px] justify-center">
        <Svg w={20} h={20}><path d="M0 3 8.500 1.700v7.800H0zM9.500 1.500 20 0v9.500H9.500zM0 10.500h8.500v7.800L0 17zM9.500 10.500H20V20L9.500 18.500z" fill="currentColor" stroke="none" /></Svg>
      </button>
      <label className="flex h-full w-[360px] items-center overflow-hidden border border-[#c8c8c8] bg-white pl-[13px]">
        <Svg w={21} h={21}><circle cx="13" cy="8" r="7" /><path d="m8 13-7.500 7.500" /></Svg>
        <input type="text" placeholder="Type here to search" aria-label="Type here to search" className="ml-3.5 w-[200px] text-[18px] outline-none placeholder:text-[#222]" />
        <Svg w={96} h={48} className="ml-auto self-end">
          <defs>
            <radialGradient id="halo" cx="58" cy="68" r="70" gradientUnits="userSpaceOnUse"><stop offset=".87" stopColor="#fbc24d" /><stop offset=".94" stopColor="#fde3a4" /><stop offset="1" stopColor="#fff" /></radialGradient>
            <linearGradient id="earth" x1="0" x2="96" y1="20" y2="10" gradientUnits="userSpaceOnUse"><stop offset=".1" stopColor="#3b7bd0" /><stop offset=".38" stopColor="#27568c" /><stop offset=".45" stopColor="#24301f" /><stop offset=".8" stopColor="#2a2f2b" /><stop offset="1" stopColor="#a0754c" /></linearGradient>
          </defs>
          <g stroke="none">
            <circle cx="58" cy="68" r="70" fill="url(#halo)" />
            <circle cx="58" cy="68" r="61" fill="url(#earth)" />
            <path d="M18 30q12-10 26-14 24-2 42 10l10 8v14H28l-4-8-8-2z" fill="#22281f" />
            <path d="M14 36q6-4 12 2l2 10H14z" fill="#1f4f80" />
            <path d="M74 44q4-8 14-8l8 6v6H74z" fill="#2a5288" />
            <g fill="#b8922f" opacity=".55"><circle cx="44" cy="30" r="7" /><circle cx="69" cy="30" r="5" /><circle cx="56" cy="40" r="5" /></g>
            <g fill="#e8b93c"><circle cx="44" cy="30" r="4" /><circle cx="69" cy="30" r="2.500" /><circle cx="56" cy="40" r="2.500" /><circle cx="32" cy="22" r="2" /><circle cx="26" cy="27" r="1.500" /><circle cx="23" cy="36" r="2" /><circle cx="44" cy="15" r="1.500" /><circle cx="37" cy="20" r="1" /><circle cx="52" cy="19" r="1" /><circle cx="73" cy="21" r="1.200" /><circle cx="84" cy="24" r="1.800" /><circle cx="78" cy="32" r="1.200" /><circle cx="92" cy="33" r="1.200" /><circle cx="60" cy="29" r="1" /><circle cx="30" cy="33" r="1" /></g>
          </g>
        </Svg>
      </label>
      <div className="ml-[3px] flex h-full">
        {apps.map((a) => (
          <button key={a.name} type="button" aria-label={a.name} className={`relative flex h-full w-[62px] items-center justify-center ${a.name === "Tableau" ? "bg-[#ededed]" : ""}`}>
            {a.icon}
            <span className={`absolute bottom-0 h-[3px] ${a.line}`} />
          </button>
        ))}
      </div>
      <div className="flex-1" />
      <button type="button" className="flex items-center text-[17px]">
        <Svg w={28} h={28}>
          <defs><linearGradient id="sun" x1="0" y1="0" x2="1" y2="1"><stop stopColor="#f4c23c" /><stop offset="1" stopColor="#ef6a10" /></linearGradient></defs>
          <circle cx="13" cy="15" r="12.500" fill="url(#sun)" stroke="none" /><circle cx="24" cy="4" r="4" fill="#c42b1c" stroke="none" />
        </Svg>
        <span className="ml-2.5">33°C</span>
        <span className="ml-2.5">Sunny</span>
      </button>
      <div className="ml-[30px] flex w-[169px] items-center justify-between">
        <Svg w={16} h={10}><path d="m1 9 7-7.500L15 9" /></Svg>
        <Svg w={16} h={20}><rect x="2" y="5.500" width="9" height="10" rx="1.500" /><path d="m11 9.500 4-3v8l-4-3M3 2q3.500-2 7 0M3 18.500q3.500 2 7 0" strokeWidth="1.200" /></Svg>
        <Svg w={20} h={18}><path d="M4 13q-4-1-3-5 1-3 4-3 2-4 6-4t5 5q3 1 3 4l-4 4z" fill="#888" stroke="#444" /><circle cx="14.500" cy="12.500" r="5.500" fill="#d92b2b" stroke="none" /><path d="m12.500 10.500 4 4m0-4-4 4" stroke="#fff" /></Svg>
        <Svg w={20} h={12}><path d="M1 1h16v10H1zM17 4h2v4h-2" /><path d="M3.500 3.500h11v5h-11z" fill="currentColor" /></Svg>
        <Svg w={17} h={17}><path d="M1 15A14 14 0 0 1 15.500 1.500M4.500 16A11 11 0 0 1 15.500 5.500M8 16.500a8 8 0 0 1 7.500-7" strokeWidth="1.200" /><circle cx="13.500" cy="14.500" r="2" fill="currentColor" stroke="none" /></Svg>
        <Svg w={21} h={16}><path d="M1 5.500h3L8.500 1v14L4 10.500H1z" strokeWidth="1.200" /><path d="M11.500 5q1.500 3 0 6" /><path d="M14 3q3 5 0 10M17 1q4.500 7 0 14" stroke="#999" /></Svg>
      </div>
      <div className="ml-3 w-8 text-center text-[14px] leading-[22px]">ENG<br />IN</div>
      <div className="ml-3.5 w-[70px] whitespace-nowrap text-center text-[14px] leading-[22px]">1:13 PM<br />4/12/2023</div>
      <button type="button" aria-label="Notifications" className="relative ml-[18px] mr-[17px]">
        <Svg w={32} h={32}>
          <path d="M1 3h19v15h-7l-4 4v-4H1z" fill="currentColor" stroke="none" /><path d="M4 7h13M4 10.500h13M4 14h9" stroke="#d6d6d6" />
          <circle cx="20" cy="21" r="9.500" fill="#d6d6d6" stroke="#666" strokeWidth="1" />
        </Svg>
        <span className="absolute left-4 top-3 text-[13px] font-semibold leading-[18px]">3</span>
      </button>
      <span className="mr-1 h-full w-px bg-[#a0a0a0]" />
    </footer>
  );
}

const menus = ["File", "Data", "Worksheet", "Dashboard", "Story", "Analysis", "Map", "Format", "Server", "Window", "Help"];

export default function App() {
  return (
    <div className="flex min-h-screen flex-col bg-[#f4f4f4] font-['Inter','Liberation_Sans',sans-serif]">
      <header className="bg-white font-['Open_Sans','Noto_Sans',sans-serif] text-[14px] text-black">
        <div className="flex h-7 items-center">
          <span className="ml-[3px] flex h-[18px] w-[18px] items-center justify-center bg-[#f4f4f4] shadow-[1px_1px_1px_#bbb]"><Svg w={16} box="0 0 24 24">{tableauMark}</Svg></span>
          <span className="ml-1.5">Tableau - hotel radisson_analysis_twb1 - Tableau license expires in 13 days</span>
          <div className="flex-1" />
          <button type="button" aria-label="Minimize" className="flex w-[58px] justify-center"><Svg w={12} h={12}><path d="M0 5.500h12" strokeWidth="1" /></Svg></button>
          <button type="button" aria-label="Restore" className="flex w-[58px] justify-center"><Svg w={13} h={13}><path d="M.5 3h9v9h-9zM3 3V.5h9V10H9.500" strokeWidth="1.200" /></Svg></button>
          <button type="button" aria-label="Close" className="mr-1 flex w-[58px] justify-center"><Svg w={13} h={13}><path d="m.5.5 12 12m0-12-12 12" strokeWidth="1.200" /></Svg></button>
        </div>
        <nav className="flex h-7 items-center gap-[21px] pl-2.5">
          {menus.map((m) => <button key={m} type="button">{m}</button>)}
        </nav>
      </header>
      <Toolbar />
      <div className="flex flex-1">
        <DataPane />
        <div className="flex min-w-0 flex-1 gap-2 pb-2 pl-[7px] pr-[7px]">
          <Cards />
          <Workspace />
        </div>
      </div>
      <SheetTabs />
      <StatusBar />
      <Taskbar />
    </div>
  );
}
